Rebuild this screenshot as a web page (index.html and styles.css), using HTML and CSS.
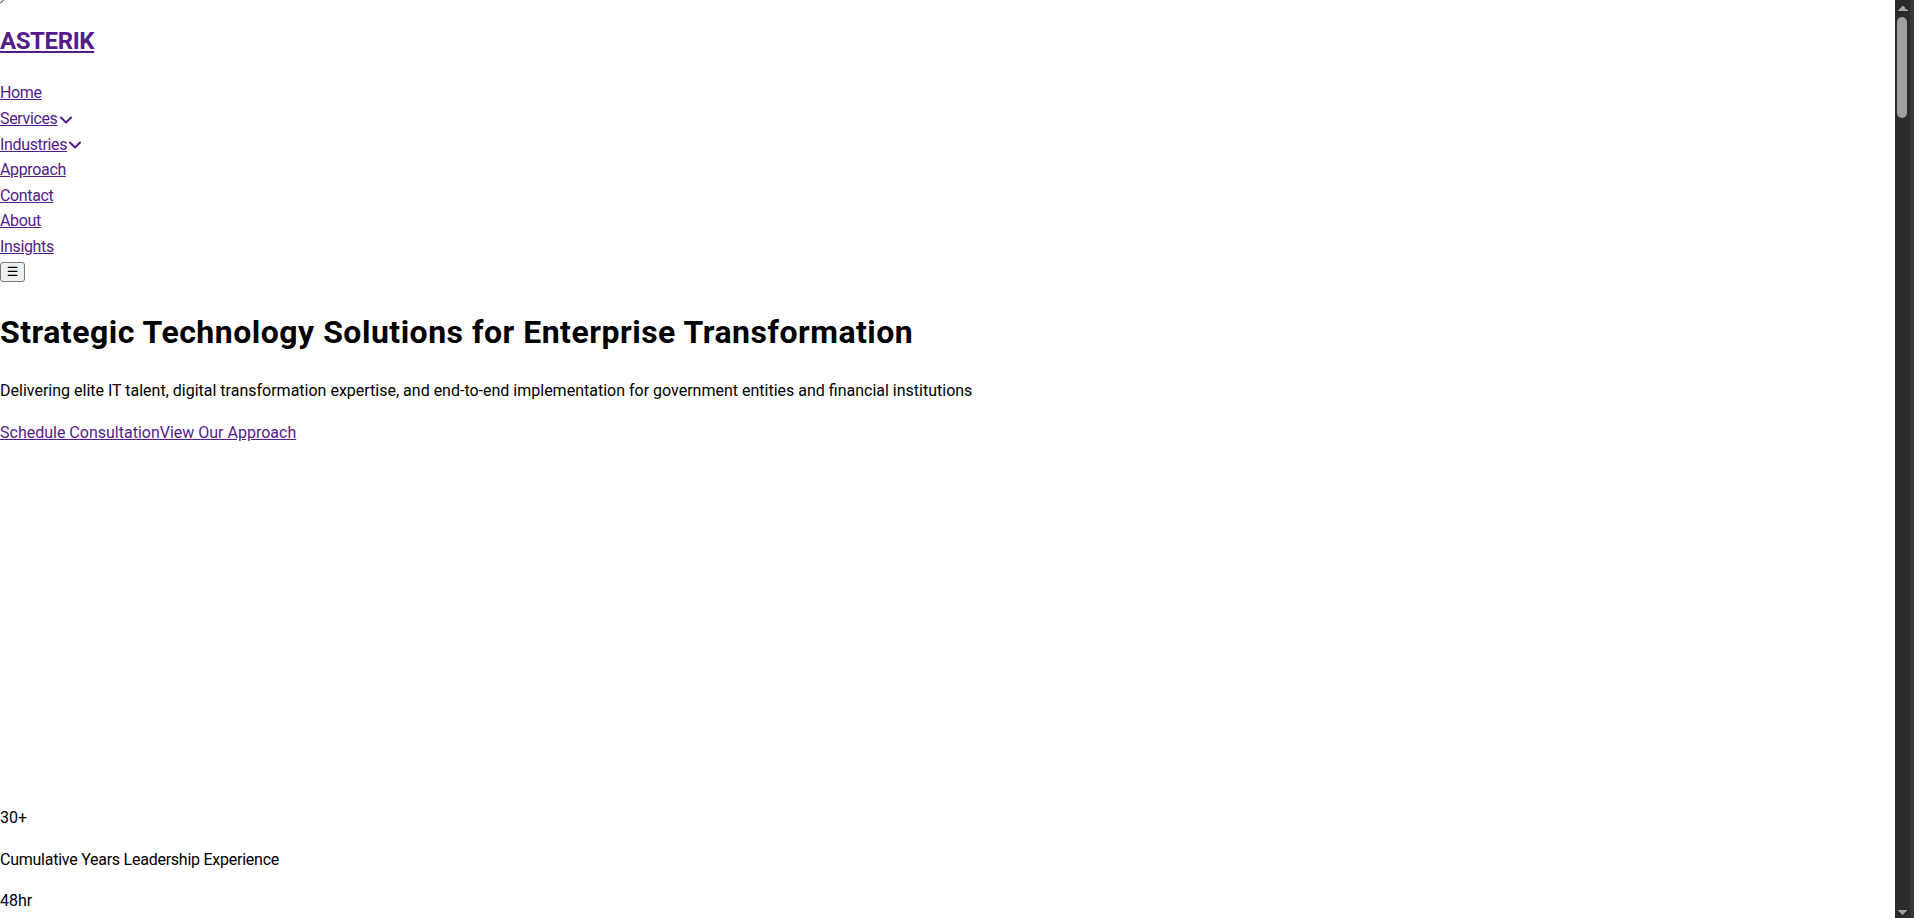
FILE: index.html
```html
<!DOCTYPE html>
<html lang="en">
<head>
<meta charset="utf-8">
<title>Asterik</title>
<link rel="stylesheet" href="styles.css">
</head>
<body>
<span class="corner-mark"></span>
<header class="site-header">
  <div class="logo"><a href="#">ASTERIK</a></div>
  <nav class="main-nav">
    <ul class="nav-list">
      <li><a href="#">Home</a></li>
      <li><a href="#">Services</a><svg class="chev" viewBox="0 0 24 24" fill="none" stroke="currentColor" stroke-width="2.5" stroke-linecap="round" stroke-linejoin="round"><path d="m6 9 6 6 6-6"/></svg></li>
      <li><a href="#">Industries</a><svg class="chev" viewBox="0 0 24 24" fill="none" stroke="currentColor" stroke-width="2.5" stroke-linecap="round" stroke-linejoin="round"><path d="m6 9 6 6 6-6"/></svg></li>
      <li><a href="#">Approach</a></li>
      <li><a href="#">Contact</a></li>
      <li><a href="#">About</a></li>
      <li><a href="#">Insights</a></li>
    </ul>
  </nav>
  <button class="menu-toggle" type="button">☰</button>
</header>
<main class="page">
  <section class="hero">
    <h1 class="hero-title">Strategic Technology Solutions for Enterprise Transformation</h1>
    <p class="hero-sub">Delivering elite IT talent, digital transformation expertise, and end-to-end implementation for government entities and financial institutions</p>
    <div class="hero-actions"><a href="#">Schedule Consultation</a><a href="#">View Our Approach</a></div>
  </section>
  <section class="stats">
    <div class="stat">
      <p class="stat-num">30+</p>
      <p class="stat-label">Cumulative Years Leadership Experience</p>
    </div>
    <div class="stat">
      <p class="stat-num">48hr</p>
      <p class="stat-label">Average Response Time</p>
    </div>
  </section>
</main>
<div class="scrollbar" aria-hidden="true">
  <span class="sb-up"></span>
  <span class="sb-thumb"></span>
  <span class="sb-track"></span>
  <span class="sb-down"></span>
</div>
</body>
</html>
```
FILE: styles.css
```css
html {
  background: #fff;
}
body {
  margin: 0;
  font-family: Roboto, "Liberation Sans", sans-serif;
  font-size: 16px;
  line-height: 1.6;
  color: #000;
}
a {
  color: #551a8b;
}
.corner-mark {
  position: absolute;
  top: -11px;
  left: -10px;
  width: 13px;
  height: 13px;
  border: 1.5px solid #2a2a2a;
  border-radius: 50%;
}
.site-header {
  padding-top: 22px;
}
.logo {
  font-size: 24px;
  font-weight: 700;
  letter-spacing: -0.4px;
  margin-bottom: 20px;
}
.nav-list {
  list-style: none;
  margin: 0;
  padding: 0;
  letter-spacing: -0.35px;
}
.nav-list li {
  color: #551a8b;
}
.chev {
  width: 20px;
  height: 20px;
  margin-left: -2px;
  vertical-align: middle;
}
.menu-toggle {
  display: block;
  margin: 2px 0 0;
  width: 25px;
  height: 20px;
  padding: 0;
  background: #efefef;
  border: 1px solid #767676;
  border-radius: 3px;
  font-family: "DejaVu Sans", sans-serif;
  font-size: 13px;
  line-height: 18px;
  color: #000;
}
.page {
  min-height: 7580px;
}
.hero {
  padding-top: 31px;
}
.hero-title {
  margin: 0;
  font-size: 32px;
  line-height: 1.2;
  font-weight: 700;
  letter-spacing: 0.5px;
}
.hero-sub {
  margin: 27px 0 0;
}
.hero-actions {
  margin-top: 16px;
}
.stats {
  padding-top: 344px;
}
.stat-num,
.stat-label {
  margin: 16px 0;
}
.stat-label {
  letter-spacing: -0.25px;
}

.scrollbar {
  position: fixed;
  top: 0;
  right: 0;
  width: 19px;
  height: 100vh;
  display: flex;
  flex-direction: column;
  background: linear-gradient(to right, #2b2b2b 0 15px, #383838 15px);
}
.sb-up,
.sb-down {
  flex: none;
  height: 17px;
}
.sb-up {
  background:
    linear-gradient(to bottom right, transparent 50%, #a3a3a3 50%) 2.5px 6px / 5px 5px no-repeat,
    linear-gradient(to bottom left, transparent 50%, #a3a3a3 50%) 7.5px 6px / 5px 5px no-repeat;
}
.sb-down {
  background:
    linear-gradient(to top right, transparent 50%, #a3a3a3 50%) 2.5px 9px / 5px 5px no-repeat,
    linear-gradient(to top left, transparent 50%, #a3a3a3 50%) 7.5px 9px / 5px 5px no-repeat;
}
.sb-thumb {
  flex: none;
  height: 101px;
  margin: 0 7px 0 2px;
  border-radius: 5px;
  background: #9f9f9f;
}
.sb-track {
  flex: 1;
}
```
